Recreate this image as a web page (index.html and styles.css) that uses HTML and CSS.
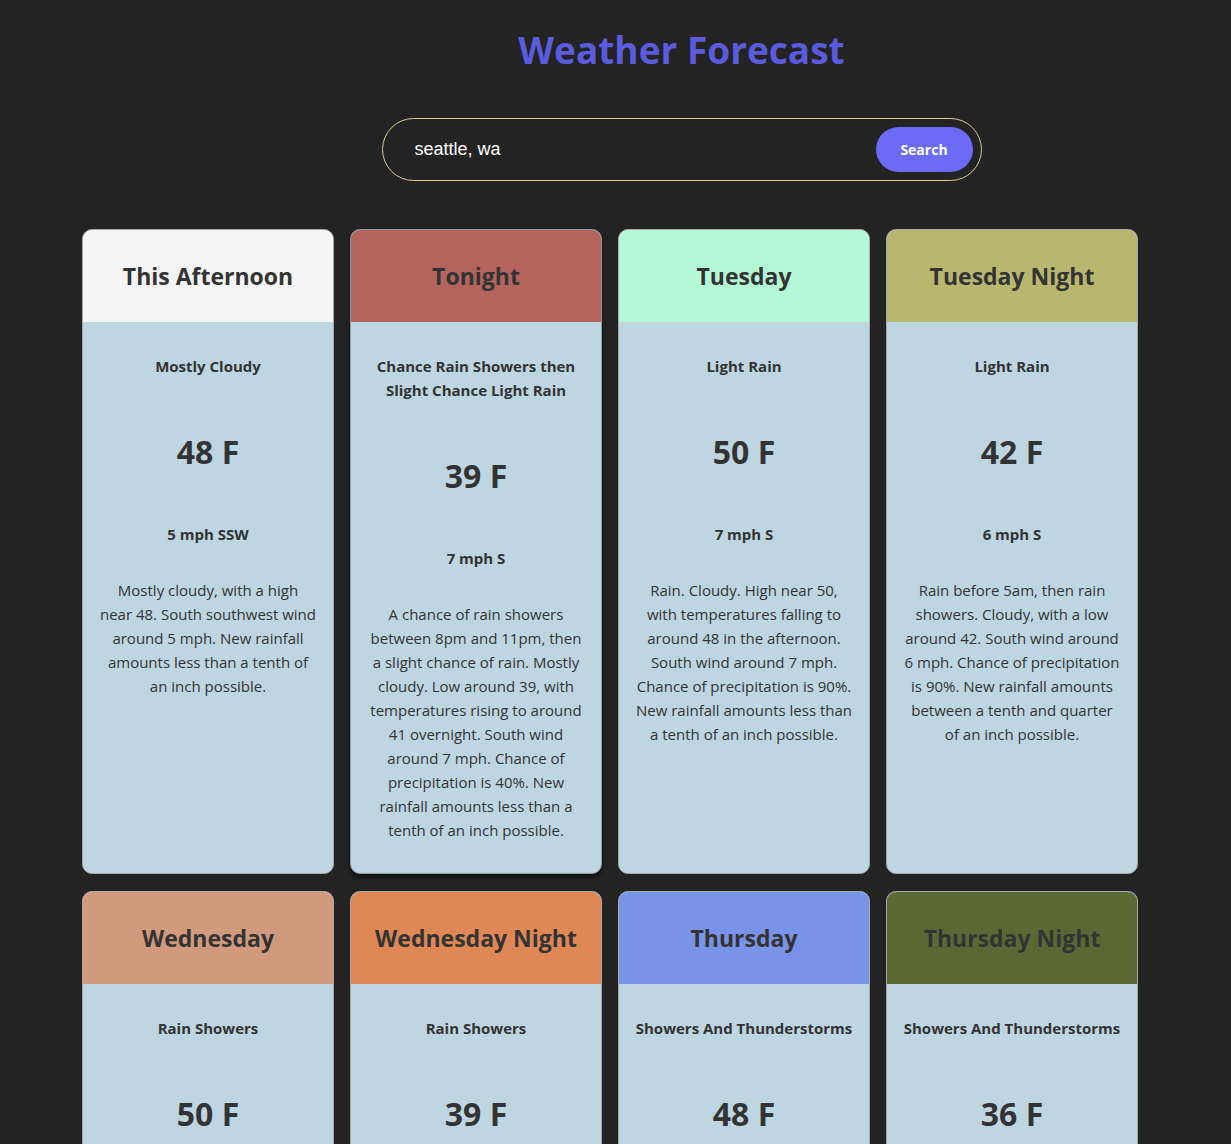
FILE: index.html
```html
<!DOCTYPE html>
<html lang="en">
<head>
<meta charset="utf-8">
<title>Weather Forecast</title>
<link rel="stylesheet" href="styles.css">
</head>
<body>
<header class="top">
  <h1 class="title">Weather Forecast</h1>
  <form class="search">
    <input class="search-input" type="text" value="seattle, wa">
    <button class="search-btn" type="button">Search</button>
  </form>
</header>
<main class="grid">
  <article class="card">
    <div class="card-head h-white"><h2>This Afternoon</h2></div>
    <div class="card-body">
      <p class="cond">Mostly Cloudy</p>
      <p class="temp">48 F</p>
      <p class="wind">5 mph SSW</p>
      <p class="desc">Mostly cloudy, with a high<br>near 48. South southwest wind around 5 mph. New rainfall amounts less than a tenth of an inch possible.</p>
    </div>
  </article>
  <article class="card card-hover">
    <div class="card-head h-red"><h2>Tonight</h2></div>
    <div class="card-body">
      <p class="cond">Chance Rain Showers then Slight Chance Light Rain</p>
      <p class="temp">39 F</p>
      <p class="wind">7 mph S</p>
      <p class="desc">A chance of rain showers between 8pm and 11pm, then a slight chance of rain. Mostly cloudy. Low around 39, with temperatures rising to around 41 overnight. South wind around 7 mph. Chance of precipitation is 40%. New rainfall amounts less than a tenth of an inch possible.</p>
    </div>
  </article>
  <article class="card">
    <div class="card-head h-mint"><h2>Tuesday</h2></div>
    <div class="card-body">
      <p class="cond">Light Rain</p>
      <p class="temp">50 F</p>
      <p class="wind">7 mph S</p>
      <p class="desc">Rain. Cloudy. High near 50, with temperatures falling to around 48 in the afternoon. South wind around 7 mph. Chance of precipitation is 90%. New rainfall amounts less than a tenth of an inch possible.</p>
    </div>
  </article>
  <article class="card">
    <div class="card-head h-olive"><h2>Tuesday Night</h2></div>
    <div class="card-body">
      <p class="cond">Light Rain</p>
      <p class="temp">42 F</p>
      <p class="wind">6 mph S</p>
      <p class="desc">Rain before 5am, then rain showers. Cloudy, with a low around 42. South wind around 6 mph. Chance of precipitation is 90%. New rainfall amounts between a tenth and quarter of an inch possible.</p>
    </div>
  </article>
  <article class="card">
    <div class="card-head h-tan"><h2>Wednesday</h2></div>
    <div class="card-body">
      <p class="cond">Rain Showers</p>
      <p class="temp">50 F</p>
      <p class="wind">8 mph S</p>
      <p class="desc">Rain showers. Cloudy, with a high near 50.</p>
    </div>
  </article>
  <article class="card">
    <div class="card-head h-orange"><h2>Wednesday Night</h2></div>
    <div class="card-body">
      <p class="cond">Rain Showers</p>
      <p class="temp">39 F</p>
      <p class="wind">6 mph S</p>
      <p class="desc">Rain showers. Mostly cloudy, with a low around 39.</p>
    </div>
  </article>
  <article class="card">
    <div class="card-head h-blue"><h2>Thursday</h2></div>
    <div class="card-body">
      <p class="cond">Showers And Thunderstorms</p>
      <p class="temp">48 F</p>
      <p class="wind">7 mph SW</p>
      <p class="desc">Showers and thunderstorms. Mostly cloudy, with a high near 48.</p>
    </div>
  </article>
  <article class="card">
    <div class="card-head h-green"><h2>Thursday Night</h2></div>
    <div class="card-body">
      <p class="cond">Showers And Thunderstorms</p>
      <p class="temp">36 F</p>
      <p class="wind">5 mph SW</p>
      <p class="desc">Showers and thunderstorms. Mostly cloudy, with a low around 36.</p>
    </div>
  </article>
</main>
</body>
</html>
```
FILE: styles.css
```css
* { box-sizing: border-box; }

body {
  margin: 0;
  background: #232323;
  font-family: "Open Sans", "Noto Sans", sans-serif;
  color: #333333;
}

.top {
  margin-left: 132px;
  display: flex;
  flex-direction: column;
  align-items: center;
}

.title {
  margin: 26px 0 0;
  font-size: 37px;
  line-height: 48px;
  font-weight: 700;
  color: #5b5bde;
}

.search {
  margin-top: 44px;
  width: 600px;
  height: 63px;
  border: 1px solid #dccb98;
  border-radius: 32px;
  display: flex;
  align-items: center;
  padding: 0 8px 0 32px;
}

.search-input {
  flex: 1;
  background: transparent;
  border: 0;
  outline: none;
  color: #ffffff;
  font-family: "Liberation Sans", Arial, sans-serif;
  font-size: 18px;
  padding: 0;
}

.search-btn {
  width: 97px;
  height: 45px;
  border: 0;
  border-radius: 23px;
  background: #6b6bf7;
  color: #ffffff;
  font-family: "Open Sans", sans-serif;
  font-weight: 700;
  font-size: 14px;
}

.grid {
  margin: 48px 0 0 82px;
  display: grid;
  grid-template-columns: repeat(4, 252px);
  column-gap: 16px;
  row-gap: 17px;
}

.card {
  height: 645px;
  border: 1px solid #a8a8a8;
  border-radius: 10px;
  overflow: hidden;
  background: #bed6e2;
  display: flex;
  flex-direction: column;
}

.card-hover {
  box-shadow: 0 3px 4px rgba(0, 0, 0, 0.6);
  border-color: #8c9aa2;
}

.card-head {
  height: 92px;
  display: flex;
  align-items: center;
  justify-content: center;
}

.card-head h2 {
  margin: 0;
  font-size: 23px;
  font-weight: 700;
  color: #333333;
}

.h-white { background: #f5f5f5; }
.h-red { background: #b3655d; }
.h-mint { background: #b3f9d5; }
.h-olive { background: #b9b76f; }
.h-tan { background: #d19a7d; }
.h-orange { background: #e08756; }
.h-blue { background: #7893e8; }
.h-green { background: #5a6934; }

.card-body {
  padding: 32px 16px 0;
  text-align: center;
}

.card-body p { margin: 0; }

.cond {
  font-size: 15px;
  line-height: 24px;
  font-weight: 700;
}

.temp {
  margin-top: 54px !important;
  font-size: 32px;
  line-height: 40px;
  font-weight: 700;
}

.wind {
  margin-top: 50px !important;
  font-size: 15px;
  line-height: 24px;
  font-weight: 700;
}

.desc {
  margin-top: 32px !important;
  font-size: 15px;
  line-height: 24px;
}
```
